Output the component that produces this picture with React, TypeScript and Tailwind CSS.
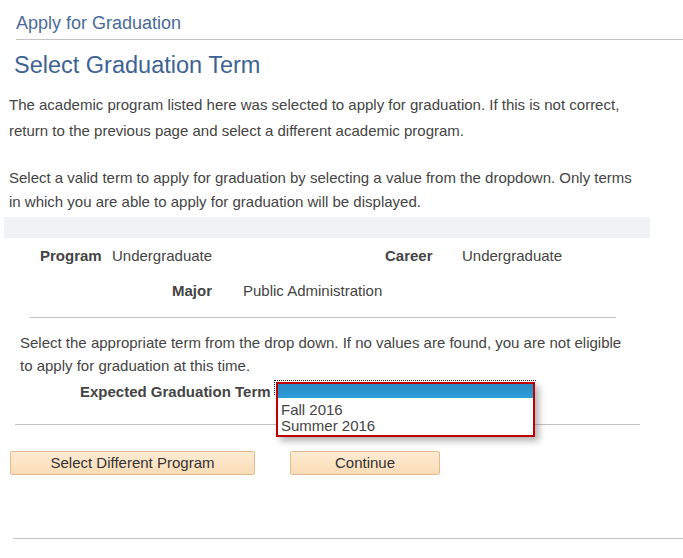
import React from "react";

export default function App() {
  return (
    <div className="relative w-[683px] h-[558px] bg-white font-['Liberation_Sans',Arial,sans-serif] text-[#444444] overflow-hidden">
      {/* Header */}
      <div className="ml-[16px] h-[40px] border-b border-[#c3c3c3] pt-[12px] text-[18px] leading-[22px] text-[#4a6b99]">
        Apply for Graduation
      </div>
      <h1 className="ml-[14px] mt-[11px] text-[23.5px] leading-[28px] text-[#3d6394]">Select Graduation Term</h1>

      <div className="mt-[13px] px-[9px] text-[15px] leading-[26px]">
        <p>
          The academic program listed here was selected to apply for graduation. If this is not correct,
          <br />
          return to the previous page and select a different academic program.
        </p>
        <p className="mt-[22px] leading-[24px]">
          Select a valid term to apply for graduation by selecting a value from the dropdown. Only terms
          <br />
          in which you are able to apply for graduation will be displayed.
        </p>
      </div>

      {/* Gray band */}
      <div className="mt-[3px] ml-[4px] w-[646px] h-[21px] bg-[#f0f2f3]" />

      {/* Program / Career */}
      <div className="mt-[8px] flex text-[15px] leading-[20px]">
        <div className="ml-[40px] w-[72px] font-bold">Program</div>
        <div className="w-[273px]">Undergraduate</div>
        <div className="w-[77px] font-bold">Career</div>
        <div>Undergraduate</div>
      </div>
      <div className="mt-[15px] flex text-[15px] leading-[20px]">
        <div className="ml-[172px] w-[71px] font-bold">Major</div>
        <div>Public Administration</div>
      </div>

      <div className="mt-[16px] ml-[30px] w-[586px] border-t border-[#c3c3c3]" />

      <p className="mt-[13px] ml-[20px] text-[15px] leading-[23px]">
        Select the appropriate term from the drop down. If no values are found, you are not eligible
        <br />
        to apply for graduation at this time.
      </p>

      <div className="mt-[5px] ml-[80px] text-[15px] leading-[20px] font-bold">Expected Graduation Term</div>

      <div className="mt-[22px] ml-[15px] w-[625px] border-t border-[#c3c3c3]" />

      {/* Buttons */}
      <div className="mt-[26px] flex text-[15px] text-[#333333]">
        <button className="ml-[10px] w-[245px] h-[24px] rounded-[2px] border border-[#e3b98d] bg-gradient-to-b from-[#fdebd3] to-[#fadcb6] leading-[22px]">
          Select Different Program
        </button>
        <button className="ml-[35px] w-[150px] h-[24px] rounded-[2px] border border-[#e3b98d] bg-gradient-to-b from-[#fdebd3] to-[#fadcb6] leading-[22px]">
          Continue
        </button>
      </div>

      <div className="mt-[63px] ml-[13px] border-t border-[#c3c3c3]" />

      {/* Open dropdown overlay */}
      <div className="absolute left-[274px] top-[380px] w-[262px] h-[3px] border-t border-dotted border-[#222]" />
      <div className="absolute left-[274px] top-[380px] h-[15px] border-l border-dotted border-[#222]" />
      <div className="absolute left-[276px] top-[382px] w-[259px] h-[55px] border-[2px] border-[#c00000] bg-white shadow-[4px_4px_7px_rgba(0,0,0,0.3)]">
        <div className="h-[14px] bg-gradient-to-b from-[#2a88c4] to-[#2aa0dc]" />
        <div className="pl-[3px] text-[15px] leading-[16px] text-[#444]">
          <div className="mt-[4px]">Fall 2016</div>
          <div>Summer 2016</div>
        </div>
      </div>
    </div>
  );
}
